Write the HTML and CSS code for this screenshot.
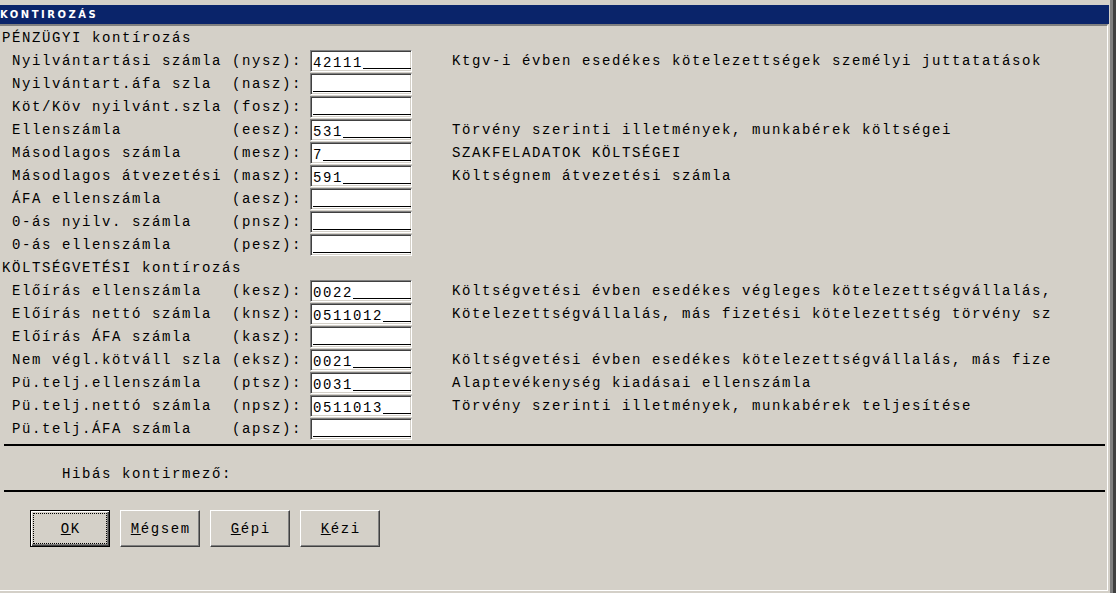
FILE: index.html
```html
<!DOCTYPE html>
<html lang="hu">
<head>
<meta charset="utf-8">
<title>KONTIROZÁS</title>
<link rel="stylesheet" href="styles.css">
</head>
<body>
<div class="window">
  <div class="titlebar">KONTIROZÁS</div>
  <div class="client">
    <div class="section">PÉNZÜGYI kontírozás</div>
    <div class="row"><span class="name">Nyilvántartási számla</span><span class="code">(nysz):</span><div class="field">42111<span class="mask"></span></div><span class="desc">Ktgv-i évben esedékes kötelezettségek személyi juttatatások</span></div>
    <div class="row"><span class="name">Nyilvántart.áfa szla</span><span class="code">(nasz):</span><div class="field"><span class="mask"></span></div></div>
    <div class="row"><span class="name">Köt/Köv nyilvánt.szla</span><span class="code">(fosz):</span><div class="field"><span class="mask"></span></div></div>
    <div class="row"><span class="name">Ellenszámla</span><span class="code">(eesz):</span><div class="field">531<span class="mask"></span></div><span class="desc">Törvény szerinti illetmények, munkabérek költségei</span></div>
    <div class="row"><span class="name">Másodlagos számla</span><span class="code">(mesz):</span><div class="field">7<span class="mask"></span></div><span class="desc">SZAKFELADATOK KÖLTSÉGEI</span></div>
    <div class="row"><span class="name">Másodlagos átvezetési</span><span class="code">(masz):</span><div class="field">591<span class="mask"></span></div><span class="desc">Költségnem átvezetési számla</span></div>
    <div class="row"><span class="name">ÁFA ellenszámla</span><span class="code">(aesz):</span><div class="field"><span class="mask"></span></div></div>
    <div class="row"><span class="name">0-ás nyilv. számla</span><span class="code">(pnsz):</span><div class="field"><span class="mask"></span></div></div>
    <div class="row"><span class="name">0-ás ellenszámla</span><span class="code">(pesz):</span><div class="field"><span class="mask"></span></div></div>
    <div class="section">KÖLTSÉGVETÉSI kontírozás</div>
    <div class="row"><span class="name">Előírás ellenszámla</span><span class="code">(kesz):</span><div class="field">0022<span class="mask"></span></div><span class="desc">Költségvetési évben esedékes végleges kötelezettségvállalás,</span></div>
    <div class="row"><span class="name">Előírás nettó számla</span><span class="code">(knsz):</span><div class="field">0511012<span class="mask"></span></div><span class="desc">Kötelezettségvállalás, más fizetési kötelezettség törvény sz</span></div>
    <div class="row"><span class="name">Előírás ÁFA számla</span><span class="code">(kasz):</span><div class="field"><span class="mask"></span></div></div>
    <div class="row"><span class="name">Nem végl.kötváll szla</span><span class="code">(eksz):</span><div class="field">0021<span class="mask"></span></div><span class="desc">Költségvetési évben esedékes kötelezettségvállalás, más fize</span></div>
    <div class="row"><span class="name">Pü.telj.ellenszámla</span><span class="code">(ptsz):</span><div class="field">0031<span class="mask"></span></div><span class="desc">Alaptevékenység kiadásai ellenszámla</span></div>
    <div class="row"><span class="name">Pü.telj.nettó számla</span><span class="code">(npsz):</span><div class="field">0511013<span class="mask"></span></div><span class="desc">Törvény szerinti illetmények, munkabérek teljesítése</span></div>
    <div class="row"><span class="name">Pü.telj.ÁFA számla</span><span class="code">(apsz):</span><div class="field"><span class="mask"></span></div></div>
    <div class="rule"></div>
    <div class="error">Hibás kontirmező:</div>
    <div class="rule rule-flush"></div>
    <div class="buttons">
      <div class="btn default"><u>O</u>K</div>
      <div class="btn"><u>M</u>égsem</div>
      <div class="btn"><u>G</u>épi</div>
      <div class="btn"><u>K</u>ézi</div>
    </div>
  </div>
</div>
</body>
</html>
```
FILE: styles.css
```css
* { box-sizing: border-box; }
html, body { margin: 0; padding: 0; }
body {
  width: 1116px;
  height: 593px;
  overflow: hidden;
  background: #d4d0c8;
  font-family: "Liberation Mono", monospace;
  font-size: 14px;
  letter-spacing: 1.6px;
  color: #000;
}
.window {
  width: 1116px;
  height: 593px;
  padding-top: 5px;
  padding-right: 8px;
  background: #d4d0c8;
  box-shadow: inset -3px 0 #404040, inset -6px 0 #808080;
}
.titlebar {
  height: 19px;
  margin-right: -1px;
  background: #0a246a;
  color: #fff;
  font-family: "DejaVu Sans", sans-serif;
  font-weight: bold;
  font-size: 10px;
  letter-spacing: 2.5px;
  line-height: 20px;
  padding-left: 0;
}
.client {
  height: 567px;
  border-top: 2px solid #808080;
  border-right: 1px solid #fff;
  border-bottom: 1px solid #fff;
  padding: 1px 0 0 2px;
}
.section {
  height: 23px;
  line-height: 22px;
  white-space: pre;
}
.row {
  display: flex;
  align-items: flex-start;
  height: 23px;
  padding-left: 10px;
  line-height: 22px;
  white-space: pre;
}
.name { flex: none; width: 220px; }
.code { flex: none; width: 70px; }
.field {
  flex: none;
  display: flex;
  align-items: flex-start;
  width: 102px;
  height: 22px;
  margin-left: 8px;
  padding: 3px 0 0 2px;
  background: #fff;
  border: 1px solid;
  border-color: #808080 #fff #fff #808080;
  box-shadow: inset 1px 1px #404040, inset -1px -1px #d4d0c8;
  line-height: 18px;
}
.mask {
  flex: 1;
  height: 15px;
  border-bottom: 1px solid #000;
}
.desc { margin-left: 40px; }
.rule {
  height: 2px;
  background: #000;
  margin: 3px 2px 0 2px;
}
.rule-flush { margin-top: 0; }
.error {
  padding: 19px 0 7px 60px;
  line-height: 18px;
}
.buttons {
  display: flex;
  gap: 10px;
  padding-left: 28px;
  margin-top: 18px;
}
.btn {
  width: 80px;
  height: 37px;
  padding-top: 2px;
  border: 1px solid;
  border-color: #fff #404040 #404040 #fff;
  box-shadow: inset -1px -1px #808080;
  line-height: 33px;
  text-align: center;
  padding-left: 1.6px;
}
.btn.default {
  border-color: #000;
  box-shadow: inset 1px 1px #fff, inset -1px -1px #404040, inset -2px -2px #808080;
  outline: 1px dotted #000;
  outline-offset: -4px;
}
```
